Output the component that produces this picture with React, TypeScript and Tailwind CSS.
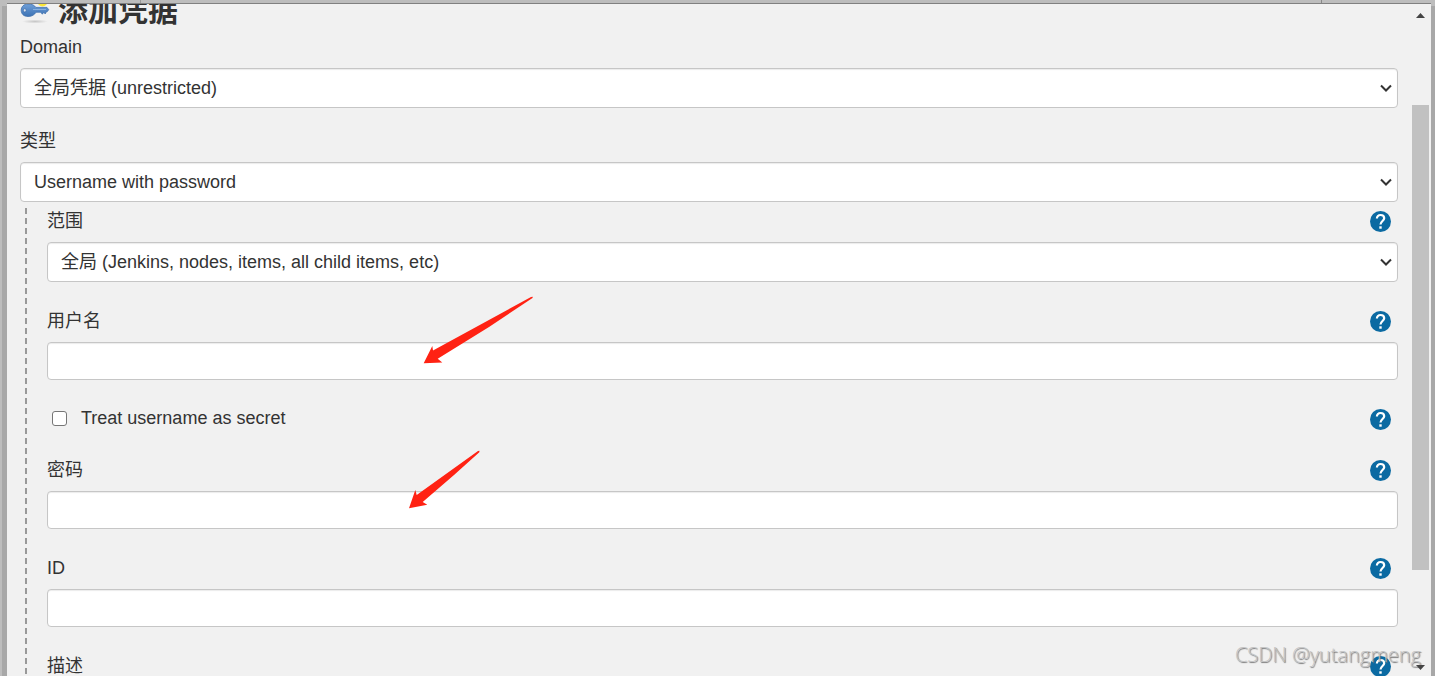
import { useId, type ReactNode } from "react";

function HelpIcon() {
  return (
    <svg viewBox="0 0 21 21" className="size-[21px]" aria-hidden="true">
      <circle cx="10.5" cy="10.5" r="10.5" fill="#0b6aa2" />
      <path
        d="M6.900 7.500C6.900 5.400 8.400 4 10.500 4S14.200 5.400 14.200 7.300C14.200 9.900 10.500 10.300 10.500 13.600"
        fill="none"
        stroke="#fff"
        strokeWidth="2.2"
      />
      <rect x="9.300" y="15.300" width="2.400" height="2.400" fill="#fff" />
    </svg>
  );
}

function HelpLink({ topic }: { topic: string }) {
  return (
    <button type="button" aria-label={topic} className="mr-[7px] block">
      <HelpIcon />
    </button>
  );
}

function KeyIcon() {
  return (
    <svg viewBox="0 0 30 30" className="size-[30px] shrink-0" aria-hidden="true">
      <defs>
        <linearGradient id="key-metal" x1="0" y1="0" x2="0" y2="1">
          <stop offset="0" stopColor="#6f9fd8" />
          <stop offset="1" stopColor="#3c72b4" />
        </linearGradient>
        <radialGradient id="key-shadow">
          <stop offset="0" stopColor="#000" stopOpacity="0.18" />
          <stop offset="1" stopColor="#000" stopOpacity="0" />
        </radialGradient>
      </defs>
      <ellipse cx="15" cy="25.500" rx="13" ry="2" fill="url(#key-shadow)" />
      <circle cx="22.500" cy="5.500" r="5" fill="#fbe736" />
      <path
        d="M8 8c4.200 0 6.500 1.300 7.800 3.400H27l1.700 2.300-1.500 2-1 .2-1 2-1.500-1.700-1.300 2-1.700-2h-4.700C14.500 18.800 12 20.500 8 20.500c-4.300 0-6.800-2.700-6.800-6.200S3.700 8 8 8z"
        fill="url(#key-metal)"
        stroke="#3f70ad"
        strokeWidth="0.8"
      />
      <ellipse cx="4.800" cy="14.300" rx="1.300" ry="1.800" fill="#dfe6ef" stroke="#3465a4" strokeWidth="0.6" />
      <path d="M13 13.500h13" stroke="#8fb4e0" strokeWidth="0.9" />
    </svg>
  );
}

function LabelRow({ id, text, help }: { id: string; text: string; help?: boolean }) {
  return (
    <div className="mb-[9px] flex h-6 items-center justify-between">
      <label htmlFor={id}>{text}</label>
      {help && <HelpLink topic={`${text} help`} />}
    </div>
  );
}

const box =
  "block w-full rounded-[4px] border border-[#c6c6c6] bg-white px-[13px] shadow-[inset_0_1px_1px_rgba(0,0,0,0.08)]";

function SelectField({ label, value, help }: { label: string; value: string; help?: boolean }) {
  const id = useId();
  return (
    <div>
      <LabelRow id={id} text={label} help={help} />
      <div className="relative">
        <select id={id} className={`${box} h-10 appearance-none pb-px`}>
          <option>{value}</option>
        </select>
        <svg
          viewBox="0 0 12 8"
          className="pointer-events-none absolute top-4 right-[6px] h-2 w-3"
          aria-hidden="true"
        >
          <path d="M1 1.500l5 5 5-5" fill="none" stroke="#333" strokeWidth="2" />
        </svg>
      </div>
    </div>
  );
}

function InputField({ label, type = "text" }: { label: string; type?: string }) {
  const id = useId();
  return (
    <div>
      <LabelRow id={id} text={label} help />
      <input id={id} type={type} className={`${box} h-[38px]`} />
    </div>
  );
}

function CheckField({ label }: { label: string }) {
  return (
    <div className="flex h-6 items-center justify-between">
      <label className="flex items-center gap-[14px] pb-[2px] pl-[5px]">
        <input
          type="checkbox"
          className="size-[15px] appearance-none rounded-[3px] border border-[#767676] bg-white checked:bg-[#0b6aa2]"
        />
        {label}
      </label>
      <HelpLink topic={`${label} help`} />
    </div>
  );
}

function Nested({ children }: { children: ReactNode }) {
  return (
    <div className="mt-[6px] ml-[5px] flex">
      <div className="w-[2px] shrink-0 bg-[repeating-linear-gradient(to_bottom,#999_0px,#999_6px,transparent_6px,transparent_10px)]" />
      <div className="min-w-0 flex-1 pt-px pl-5">{children}</div>
    </div>
  );
}

function Scrollbar() {
  return (
    <div className="relative z-10 flex w-[18px] shrink-0 flex-col items-center pt-[9px] pb-[6px]" aria-hidden="true">
      <svg viewBox="0 0 9 5" className="h-[5px] w-[9px]">
        <path d="M0 5L4.500 0 9 5z" fill="#444" />
      </svg>
      <div className="flex w-full flex-1 flex-col pt-[87px] pl-px">
        <div className="h-[83%] bg-[#c1c1c1]" />
      </div>
      <svg viewBox="0 0 9 5" className="h-[5px] w-[9px]">
        <path d="M0 0h9L4.500 5z" fill="#444" />
      </svg>
    </div>
  );
}

function Arrows() {
  return (
    <svg
      viewBox="0 0 130 220"
      className="pointer-events-none absolute top-[293px] left-[405px] h-[220px] w-[130px]"
      aria-hidden="true"
    >
      <g fill="#ff2213">
        <path d="M127.800 3.700L126 4 28 57.500 27.300 53 18.700 70.300 37.300 69.500 32.700 65.700 84 34 127.500 5z" />
        <path d="M74.500 157.800L73 158 11.700 202 10.300 197 4 215.300 22.300 211.700 17.700 209 49 182 74.300 159.200z" />
      </g>
    </svg>
  );
}

export default function App() {
  return (
    <div className="relative flex h-screen flex-col overflow-hidden bg-[#bdbdbd] font-['Liberation_Sans','Noto_Sans_CJK_SC',sans-serif] text-[18px] leading-6 text-[#333]">
      <div className="flex h-[3px] shrink-0 justify-between px-[113px]">
        <span className="ml-[27px] w-px bg-[#999]" />
        <span className="w-px bg-[#888]" />
      </div>
      <div className="flex min-h-0 flex-1">
        <div className="mt-[3px] ml-[2px] w-[5px] shrink-0 bg-[#a8a8a8]" />
        <div className="flex min-w-0 flex-1 border-t border-[#808080] bg-[#f1f1f1]">
          <main className="min-w-0 flex-1 overflow-hidden px-[13px]">
            <h1 className="-mt-[11px] mb-[6px] flex h-9 items-center gap-2 text-[30px] leading-9 font-bold">
              <KeyIcon />
              添加凭据
            </h1>
            <form className="flex flex-col">
              <div className="flex flex-col gap-[21px]">
                <SelectField label="Domain" value="全局凭据 (unrestricted)" />
                <SelectField label="类型" value="Username with password" />
              </div>
              <Nested>
                <div className="flex flex-col gap-[27px]">
                  <SelectField label="范围" value="全局 (Jenkins, nodes, items, all child items, etc)" help />
                  <InputField label="用户名" />
                  <CheckField label="Treat username as secret" />
                  <InputField label="密码" type="password" />
                  <InputField label="ID" />
                  <InputField label="描述" />
                </div>
              </Nested>
            </form>
          </main>
          <Scrollbar />
          <div className="w-[2px] shrink-0" />
        </div>
        <div className="mt-[3px] w-1 shrink-0 bg-[#a8a8a8]" />
      </div>
      <Arrows />
      <div className="pointer-events-none absolute right-[14px] bottom-[7px] font-['Open_Sans','Noto_Sans',sans-serif] text-[20px] leading-7 font-light text-[#c4c4c4] [text-shadow:1px_1px_1px_#777]">
        CSDN @yutangmeng
      </div>
    </div>
  );
}
